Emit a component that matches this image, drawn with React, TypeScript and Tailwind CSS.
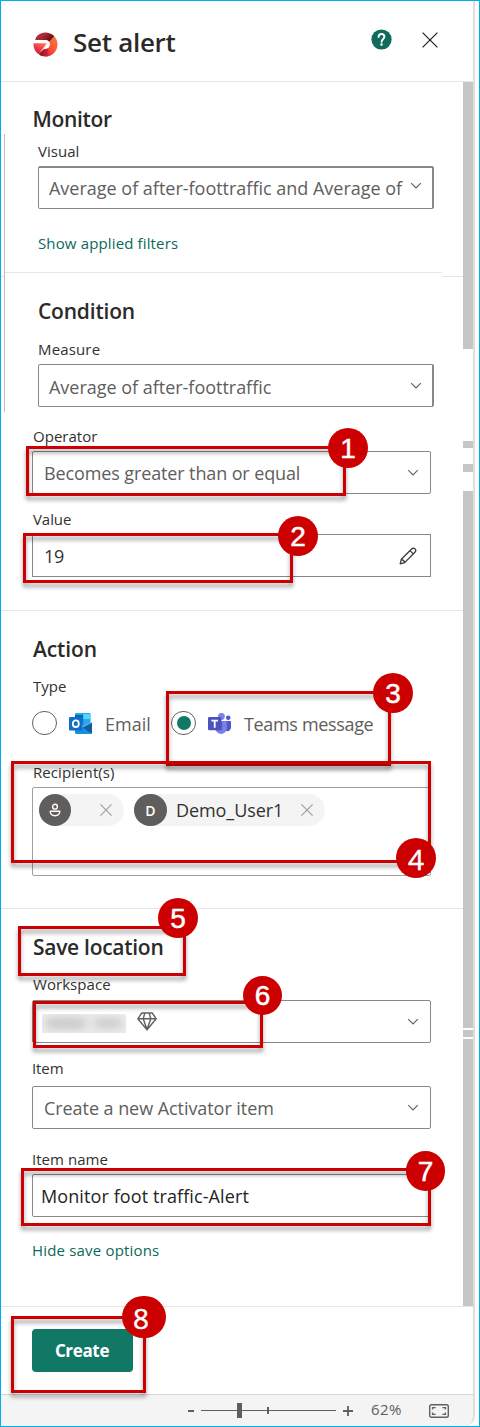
import React from "react";

const ChevronIcon = ({ className = "" }: { className?: string }) => (
  <svg className={className} width="12" height="8" viewBox="0 0 12 8" fill="none" stroke="#616161" strokeWidth="1.1">
    <path d="M1.200 1.200 6 6 10.800 1.200" />
  </svg>
);

const CloseIcon = ({ size, color, width }: { size: number; color: string; width: number }) => (
  <svg width={size} height={size} viewBox="0 0 16 16" fill="none" stroke={color} strokeWidth={width}>
    <path d="M.6.6 15.4 15.4M15.4.6.6 15.4" />
  </svg>
);

const ActivatorLogo = () => (
  <svg width="25" height="25" viewBox="0 0 25 25">
    <defs>
      <clipPath id="lg-clip"><circle cx="12.500" cy="12.500" r="12" /></clipPath>
      <linearGradient id="lg-top" x1="0" y1="0" x2="1" y2="0.500">
        <stop offset="0" stopColor="#bb3546" />
        <stop offset="0.550" stopColor="#a52735" />
        <stop offset="1" stopColor="#5d0a10" />
      </linearGradient>
      <linearGradient id="lg-right" x1="0.800" y1="0" x2="0.200" y2="1">
        <stop offset="0" stopColor="#ff7a45" />
        <stop offset="0.600" stopColor="#fb5433" />
        <stop offset="1" stopColor="#e0263c" />
      </linearGradient>
      <linearGradient id="lg-left" x1="0.900" y1="0" x2="0.300" y2="1">
        <stop offset="0" stopColor="#ff7d4a" />
        <stop offset="0.550" stopColor="#f0384c" />
        <stop offset="1" stopColor="#c41f3c" />
      </linearGradient>
      <linearGradient id="lg-bottom" x1="0" y1="0.500" x2="1" y2="0.500">
        <stop offset="0" stopColor="#7d0a18" />
        <stop offset="1" stopColor="#dc2340" />
      </linearGradient>
    </defs>
    <g clipPath="url(#lg-clip)">
      <path d="M12 8 21.500 2 25 8v17H12z" fill="url(#lg-right)" />
      <path d="M2 8.200 5 0h13l3.500 3.700L16.300 9.500 12.500 8.200z" fill="url(#lg-top)" />
      <path d="M11.500 16.500 15 16l.5 9H5l1.500-4z" fill="url(#lg-bottom)" />
      <path d="M0 8.100H12.500c2.700 0 4.500 1.800 4.500 4.200 0 2.500-1.900 4.400-4.500 4.600l-2-.1L12.500 12H0z" fill="#fff" />
      <path d="M0 11.200h13.400c.3 0 .4.300.2.600L5.500 22.500 0 19z" fill="url(#lg-left)" />
    </g>
  </svg>
);

const HelpIcon = () => (
  <svg width="21" height="21" viewBox="0 0 21 21">
    <circle cx="10.500" cy="10.500" r="10.100" fill="#0f6b5c" />
    <path d="M7.600 8c0-1.800 1.200-3 2.900-3s2.900 1.100 2.900 2.800c0 2.400-2.800 2.600-2.800 4.900" fill="none" stroke="#fff" strokeWidth="1.900" strokeLinecap="round" />
    <circle cx="10.500" cy="15.600" r="1.250" fill="#fff" />
  </svg>
);

const PencilIcon = () => (
  <svg width="18" height="18" viewBox="0 0 18 18" fill="none" stroke="#3b3a39" strokeWidth="1.300" strokeLinejoin="round">
    <path d="M1.200 16.800 2.300 12.300 12.600 2c1-1 2.500-1 3.400-.1.900.9.900 2.400-.1 3.400L5.700 15.600zM11 3.600 14.300 6.900M2.300 12.300c1.700.3 2.900 1.500 3.400 3.300" />
  </svg>
);

const OutlookIcon = () => (
  <svg width="23" height="21" viewBox="0 0 23 21">
    <path d="M7 0h13.500c.6 0 1 .4 1 1v9L14 14 6 10V1c0-.6.400-1 1-1z" fill="#28a8ea" />
    <path d="M6 2h8.300v4H6z" fill="#0b64b0" />
    <path d="M14.300 1h7.200v5h-7.200z" fill="#50d9ff" />
    <path d="M6 6h8.300v5H6z" fill="#0f78d4" />
    <path d="M6 10.500 14.500 15 23 9.500V19.500c0 .8-.7 1.500-1.500 1.500H7.500C6.700 21 6 20.300 6 19.500z" fill="#1490df" />
    <path d="M23 9.500V19.500c0 .4-.2.800-.5 1.100L13.500 14.400z" fill="#0f5da8" />
    <rect x="0" y="4" width="13.500" height="13.500" rx="1.200" fill="#0f6fc6" />
    <ellipse cx="6.800" cy="10.700" rx="3" ry="3.300" fill="none" stroke="#fff" strokeWidth="1.800" />
  </svg>
);

const TeamsIcon = () => (
  <svg width="23" height="21" viewBox="0 0 23 21">
    <circle cx="20.200" cy="4.800" r="2.300" fill="#5059c9" />
    <path d="M16.500 8H22c.6 0 1 .4 1 1v5.200c0 2.300-1.600 4-3.700 4s-3.600-1.700-3.600-4z" fill="#5059c9" />
    <circle cx="13.400" cy="3.500" r="3.400" fill="#7b83eb" />
    <path d="M8.500 8h9.200c.6 0 1 .5 1 1v6.300c0 3.200-2.500 5.700-5.600 5.700s-5.600-2.500-5.600-5.700V9c0-.6.400-1 1-1z" fill="#7b83eb" />
    <path d="M8.500 8h5.800v9.300H7.500V9c0-.6.400-1 1-1z" fill="#5a62c8" />
    <rect x="0" y="4" width="13.300" height="13.300" rx="1.200" fill="#4b53bc" />
    <path d="M3.400 7.700h6.600M6.700 7.700v7" stroke="#fff" strokeWidth="1.800" />
  </svg>
);

const PersonIcon = () => (
  <svg width="12" height="14" viewBox="0 0 12 14" fill="none" stroke="#fff" strokeWidth="1.400">
    <circle cx="6" cy="3.700" r="2.400" />
    <path d="M1.300 8.300h9.400c.3 2.700-1.700 4.500-4.700 4.500S1 11 1.300 8.300z" />
  </svg>
);

const DiamondIcon = () => (
  <svg width="20" height="19" viewBox="0 0 20 19" fill="none" stroke="#616161" strokeWidth="1.400" strokeLinejoin="round">
    <path d="M4.800 1h10.400L19.200 6.800 10 17.800.8 6.800zM.8 6.800h18.400M7.800 1 6.200 6.800 10 17.500 13.800 6.800 12.200 1" />
  </svg>
);

const FitIcon = () => (
  <svg width="20" height="14" viewBox="0 0 20 14" fill="none" stroke="#616161" strokeWidth="1.400">
    <rect x=".7" y=".7" width="18.600" height="12.600" rx="1.800" />
    <path d="M3.600 5.600V3.600H6.600M13.400 3.600h3v2M16.400 8.400v2h-3M6.600 10.400h-3v-2" />
  </svg>
);

const Label = ({ className = "", color = "text-[#323130]", children }: { className?: string; color?: string; children: React.ReactNode }) => (
  <div className={"h-5 text-[15px] leading-5 whitespace-nowrap " + color + " " + className}>{children}</div>
);

const Heading = ({ className = "", children }: { className?: string; children: React.ReactNode }) => (
  <h2 className={"h-7 text-[21px] leading-7 font-semibold whitespace-nowrap text-[#2b2a29] " + className}>{children}</h2>
);

const Field = ({ className = "", width = "w-[399px]", children }: { className?: string; width?: string; children: React.ReactNode }) => (
  <div className={"flex h-[43px] items-center justify-between border border-[#8a8886] bg-white text-[18px] leading-6 whitespace-nowrap text-[#605e5c] " + width + " " + className}>
    {children}
  </div>
);

const Mark = ({ box, badge, n, font = "font-['Liberation_Sans']" }: { box: string; badge: string; n: number; font?: string }) => (
  <>
    <div className={"absolute border-[3px] border-[#cc0000] drop-shadow-[0_4px_2px_rgba(0,0,0,0.38)] " + box} />
    <div className={"absolute flex items-center justify-center rounded-full bg-[#cc0000] pt-px text-[28px] leading-none text-white [-webkit-text-stroke:0.5px_#fff] " + font + " " + badge}>{n}</div>
  </>
);

const Scrollbar = () => (
  <div className="flex w-[10px] flex-col bg-white">
    <div className="h-[267px] bg-[#c6c6c6]" />
    <div className="mt-[92px] h-[7px] bg-[#c6c6c6]" />
    <div className="mt-4 h-2 bg-[#c6c6c6]" />
    <div className="mt-[19px] h-[537px] bg-[#c6c6c6]" />
    <div className="mt-[2px] h-[7px] bg-[#c6c6c6]" />
    <div className="mt-[2px] h-[267px] bg-[#c6c6c6]" />
  </div>
);

export default function App() {
  return (
    <div className="relative h-[1427px] w-[480px] overflow-hidden border border-[#00adef] bg-white font-['Open_Sans',sans-serif]">
      <div className="flex h-[1425px] w-[474px] flex-col rounded-br-[10px] border-r-2 border-[#dedede] bg-[#f4f4f4]">
        <header className="flex h-[81px] shrink-0 items-start border-b border-[#e6e6e6] bg-white">
          <div className="mt-[31px] ml-8"><ActivatorLogo /></div>
          <h1 className="mt-[25px] ml-[15px] w-[297px] text-[26px] leading-8 font-semibold tracking-[-0.29px] text-[#2b2a29]">Set alert</h1>
          <div className="mt-[28px] ml-px"><HelpIcon /></div>
          <div className="mt-[31px] ml-[30px]"><CloseIcon size={16} color="#242424" width={1.3} /></div>
        </header>

        <div className="flex h-[1224px] shrink-0">
          <main className="w-[462px] bg-white">
            <div className="h-[52px] pt-[23px] pl-[31.5px]">
              <Heading className="tracking-[-0.35px]">Monitor</Heading>
            </div>

            <div className="flex h-[278px]">
              <div className="w-[3px] pt-[142px]"><div className="h-px bg-[#e6e6e6]" /></div>
              <section className="w-[438px] border-l border-[#bdbdbd] pt-[7px]">
                <div className="pl-[33px]">
                  <Label className="tracking-[0.02px]">Visual</Label>
                  <Field width="w-[396px]" className="mt-[5px] rounded-[2px] border-t-2 border-r-2 pr-[10px] pl-[10px]">
                    <span className="tracking-[-0.01px]">Average of after-foottraffic and Average of</span>
                    <ChevronIcon className="mb-1" />
                  </Field>
                  <Label className="mt-6 tracking-[0.14px]" color="text-[#0c695a]">Show applied filters</Label>
                </div>
                <div className="mt-[19px] h-px bg-[#e6e6e6]" />
                <div className="pl-[33px]">
                  <Heading className="mt-6 tracking-[-0.2px]">Condition</Heading>
                  <Label className="mt-[14px] tracking-[0.15px]">Measure</Label>
                  <Field width="w-[396px]" className="mt-[5px] rounded-[2px] border-r-2 pr-[10px] pl-[10px]">
                    <span className="pt-[3px] tracking-[-0.02px]">Average of after-foottraffic</span>
                    <ChevronIcon />
                  </Field>
                </div>
              </section>
              <div className="w-[21px] pt-[142px]"><div className="h-px bg-[#e6e6e6]" /></div>
            </div>

            <section className="h-[199px] border-b border-[#e6e6e6] pt-[14px] pl-[31px]">
              <Label className="pl-px tracking-[0.02px]">Operator</Label>
              <Field className="mt-[5px] rounded-[2px] pr-[11px] pl-[11px]">
                <span className="tracking-[-0.12px]">Becomes greater than or equal</span>
                <ChevronIcon />
              </Field>
              <Label className="mt-[15px] pl-px tracking-[-0.07px]">Value</Label>
              <Field className="mt-[5px] pr-[13px] pl-[11px]">
                <span className="tracking-[-0.2px] text-[#323130]">19</span>
                <PencilIcon />
              </Field>
            </section>

            <section className="h-[298px] border-b border-[#e6e6e6] pt-6 pl-[31px]">
              <Heading className="pl-px tracking-[-0.1px]">Action</Heading>
              <Label className="mt-[13px] pl-px">Type</Label>
              <div className="mt-[15px] flex h-6 items-center text-[18px] leading-6 whitespace-nowrap text-[#605e5c]">
                <span className="h-6 w-[25px] rounded-full border border-[#616161]" />
                <span className="ml-3"><OutlookIcon /></span>
                <span className="ml-[13px] w-[66px] pt-px tracking-[0.03px]">Email</span>
                <span className="flex h-6 w-[25px] items-center justify-center rounded-full border border-[#616161]">
                  <span className="size-[14px] rounded-full bg-[#117865]" />
                </span>
                <span className="ml-3"><TeamsIcon /></span>
                <span className="ml-[13px] pt-px tracking-[-0.34px]">Teams message</span>
              </div>
              <Label className="mt-[27px] pl-px tracking-[0.08px]">Recipient(s)</Label>
              <div className="mt-[5px] flex h-[89px] w-[399px] items-start gap-[10px] rounded-[2px] border border-[#a19f9d] pt-[6px] pl-[6px]">
                <div className="flex h-8 w-[85px] items-center justify-between rounded-full bg-[#f4f4f4] pr-3">
                  <span className="flex size-8 items-center justify-center rounded-full bg-[#605e5c]"><PersonIcon /></span>
                  <CloseIcon size={12} color="#9b9b9b" width={1.4} />
                </div>
                <div className="flex h-8 w-[191px] items-center rounded-full bg-[#f4f4f4]">
                  <span className="flex h-8 w-[33px] items-center justify-center rounded-full bg-[#605e5c] text-[14px] font-semibold text-white">D</span>
                  <span className="ml-[9px] w-[125px] text-[18px] leading-6 tracking-[-0.08px] text-[#323130]">Demo_User1</span>
                  <CloseIcon size={12} color="#9b9b9b" width={1.4} />
                </div>
              </div>
            </section>

            <section className="h-[397px] pt-6 pl-[31px]">
              <Heading className="pl-px tracking-[-0.28px]">Save location</Heading>
              <Label className="mt-[13px] pl-px tracking-[0.05px]">Workspace</Label>
              <Field className="mt-[6px] rounded-[2px] pr-[11px] pl-[9px]">
                <span className="flex items-center gap-[11px]">
                  <span className="mt-1 flex h-[19px] w-[84px] items-center gap-2 overflow-hidden bg-[#eeeeee] px-1">
                    <span className="h-[11px] w-10 bg-[#c6c6c6] blur-[5px]" />
                    <span className="h-[11px] w-7 bg-[#cbcbcb] blur-[5px]" />
                  </span>
                  <DiamondIcon />
                </span>
                <ChevronIcon />
              </Field>
              <Label className="mt-[15px] tracking-[-0.1px]">Item</Label>
              <Field className="mt-2 rounded-[2px] pr-[11px] pl-[11px]">
                <span className="tracking-[-0.06px]">Create a new Activator item</span>
                <ChevronIcon />
              </Field>
              <Label className="mt-5 tracking-[0.04px]">Item name</Label>
              <Field className="mt-[5px] rounded-[2px] pl-2">
                <span className="tracking-[0.1px] text-[#242424]">Monitor foot traffic-Alert</span>
              </Field>
              <Label className="mt-[23px] tracking-[0.18px]" color="text-[#0c695a]">Hide save options</Label>
            </section>
          </main>
          <Scrollbar />
        </div>

        <footer className="h-[88px] shrink-0 border-t border-[#e6e6e6] bg-white pt-[22px] pl-[31px]">
          <button className="h-[43px] w-[101px] rounded-[4px] bg-[#117865] pr-px pt-px text-[17px] leading-6 font-bold tracking-[-0.35px] text-white">Create</button>
        </footer>

        <div className="flex flex-1 items-center border-t border-[#d6d6d6] pl-[187px] text-[#605e5c]">
          <span className="h-[2px] w-[6px] bg-[#605e5c]" />
          <div className="ml-[7px] flex h-4 w-[135px] items-center">
            <span className="h-px w-9 bg-[#605e5c]" />
            <span className="h-[15px] w-[5px] bg-[#605e5c]" />
            <span className="h-px w-[25px] bg-[#605e5c]" />
            <span className="h-[7px] w-[2px] bg-[#605e5c]" />
            <span className="h-px flex-1 bg-[#605e5c]" />
          </div>
          <svg className="ml-[7px]" width="10" height="10" viewBox="0 0 10 10" stroke="#605e5c" strokeWidth="1.800"><path d="M0 5h10M5 0v10" /></svg>
          <span className="ml-[18px] w-[58px] pb-[3px] text-[15px] leading-5 tracking-[0.4px]">62%</span>
          <FitIcon />
        </div>
      </div>

      <div className="absolute -top-px -left-px h-[1427px] w-[480px]">
        <Mark n={1} box="top-[446px] left-[26px] h-[50px] w-[320px]" badge="top-[428px] left-[328px] size-10" />
        <Mark n={2} box="top-[533px] left-[23px] h-[50px] w-[270px]" badge="top-[516px] left-[278px] size-10" />
        <Mark n={3} box="top-[691px] left-[166px] h-[75px] w-[225px]" badge="top-[673px] left-[373px] size-10" />
        <Mark n={4} box="top-[761px] left-[11px] h-[102px] w-[420px]" badge="top-[838px] left-[396px] size-10" font="font-['Open_Sans']" />
        <Mark n={5} box="top-[926px] left-[18px] h-[50px] w-[168px]" badge="top-[898px] left-[158px] size-10" />
        <Mark n={6} box="top-[1001px] left-[33px] h-[47px] w-[230px]" badge="top-[976px] left-[243px] size-[39px]" />
        <Mark n={7} box="top-[1168px] left-[21px] h-[58px] w-[410px]" badge="top-[1151px] left-[406px] h-10 w-[39px]" />
        <Mark n={8} box="top-[1316px] left-[11px] h-[77px] w-[135px]" badge="top-[1296px] left-[122px] h-[42px] w-11 pr-[6px]" font="font-['Open_Sans']" />
      </div>
    </div>
  );
}
